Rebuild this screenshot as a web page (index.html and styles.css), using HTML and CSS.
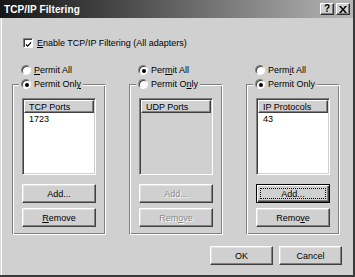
FILE: index.html
```html
<!DOCTYPE html>
<html>
<head>
<meta charset="utf-8">
<link rel="stylesheet" href="styles.css">
</head>
<body>
<div class="window">
  <div class="titlebar">
    <span class="title">TCP/IP Filtering</span>
    <div class="caption-btns">
      <span class="cbtn help">?</span>
      <span class="cbtn close"><svg width="8" height="7" viewBox="0 0 8 7"><path d="M0 0h2l2 2.5L6 0h2L5 3.5 8 7H6L4 4.5 2 7H0l3-3.5z" fill="#000"/></svg></span>
    </div>
  </div>
  <div class="body">
    <div class="check-row">
      <span class="checkbox"><svg width="8" height="8" viewBox="0 0 8 8"><path d="M1 3.5l2 2 4-4.5v2l-4 4.5-2-2z" fill="#000"/></svg></span>
      <span><u>E</u>nable TCP/IP Filtering (All adapters)</span>
    </div>
    <div class="columns">
      <div class="col">
        <div class="radio-row"><span class="radio"></span><span><u>P</u>ermit All</span></div>
        <div class="group">
          <div class="legend"><span class="radio checked"></span><span>Permit Onl<u>y</u></span></div>
          <div class="listbox">
            <div class="lb-header">TCP Ports</div>
            <div class="lb-item">1723</div>
          </div>
          <div class="btn">Add...</div>
          <div class="btn"><u>R</u>emove</div>
        </div>
      </div>
      <div class="col">
        <div class="radio-row"><span class="radio checked"></span><span>Per<u>m</u>it All</span></div>
        <div class="group">
          <div class="legend"><span class="radio"></span><span>Permit O<u>n</u>ly</span></div>
          <div class="listbox disabled">
            <div class="lb-header">UDP Ports</div>
          </div>
          <div class="btn disabled">Add...</div>
          <div class="btn disabled">Rem<u>o</u>ve</div>
        </div>
      </div>
      <div class="col">
        <div class="radio-row"><span class="radio"></span><span>Perm<u>i</u>t All</span></div>
        <div class="group">
          <div class="legend"><span class="radio checked"></span><span>Permit Only</span></div>
          <div class="listbox">
            <div class="lb-header">IP Protocols</div>
            <div class="lb-item">43</div>
          </div>
          <div class="btn default"><span class="focus">Add...</span></div>
          <div class="btn">Remo<u>v</u>e</div>
        </div>
      </div>
    </div>
    <div class="footer">
      <div class="btn ok">OK</div>
      <div class="btn ok">Cancel</div>
    </div>
  </div>
</div>
</body>
</html>
```
FILE: styles.css
```css
html, body {
  margin: 0;
  padding: 0;
  background: #d0d0d0;
}
body {
  font-family: "Liberation Sans", Arial, sans-serif;
  font-size: 9px;
  color: #000;
}
u { text-decoration: underline; text-underline-offset: 1px; }

.window {
  width: 355px;
  height: 277px;
  box-sizing: border-box;
  background: #d0d0d0;
  border-right: 2px solid #3a3a3a;
  border-bottom: 2px solid #3a3a3a;
  display: flex;
  flex-direction: column;
}

.titlebar {
  height: 18px;
  flex: none;
  display: flex;
  align-items: center;
  justify-content: space-between;
  padding: 0 3px 0 4px;
  background: linear-gradient(to right, #161616 0%, #4a4a4a 35%, #b6b6b6 100%);
}
.title {
  color: #fff;
  font-weight: bold;
  font-size: 10px;
  letter-spacing: 0.1px;
}
.caption-btns {
  display: flex;
  gap: 2px;
}
.cbtn {
  width: 14px;
  height: 12px;
  box-sizing: border-box;
  background: #d0d0d0;
  border: 1px solid;
  border-color: #fff #303030 #303030 #fff;
  box-shadow: inset -1px -1px #808080;
  display: flex;
  align-items: center;
  justify-content: center;
  font-weight: bold;
  font-size: 10px;
  line-height: 10px;
}

.body {
  flex: 1;
  border-left: 1px solid #dcdcdc;
  box-shadow: inset 1px 0 #fff;
  padding-top: 20px;
  display: flex;
  flex-direction: column;
}

.check-row {
  display: flex;
  align-items: center;
  gap: 4px;
  padding-left: 22px;
  height: 10px;
  line-height: 10px;
}
.checkbox {
  width: 10px;
  height: 10px;
  box-sizing: border-box;
  background: #fff;
  border: 1px solid;
  border-color: #808080 #fff #fff #808080;
  box-shadow: inset 1px 1px #404040;
  display: flex;
  align-items: center;
  justify-content: center;
}
.checkbox svg { margin: 1px 0 0 1px; }

.columns {
  display: flex;
  gap: 23px;
  padding-left: 11px;
  margin-top: 15px;
}
.col {
  width: 94px;
  display: flex;
  flex-direction: column;
}
.radio-row, .legend {
  display: flex;
  align-items: center;
  gap: 3px;
  height: 14px;
  line-height: 14px;
}
.radio-row {
  padding-left: 9px;
}
.radio {
  width: 10px;
  height: 10px;
  box-sizing: border-box;
  border-radius: 50%;
  background: #fff;
  border: 1px solid;
  border-color: #808080 #fff #fff #808080;
  box-shadow: inset 1px 1px #404040;
  display: flex;
  align-items: center;
  justify-content: center;
}
.radio.checked::after {
  content: "";
  width: 4px;
  height: 4px;
  border-radius: 50%;
  background: #000;
  margin: 1px 0 0 1px;
}

.group {
  margin-top: 7px;
  border: 1px solid;
  border-color: #808080 #fff #fff #808080;
  box-shadow: inset 1px 1px #fff, inset -1px -1px #808080;
  padding: 0 9px 7px 9px;
  display: flex;
  flex-direction: column;
}
.legend {
  margin: -8px 0 0 -3px;
  padding: 0 2px;
  align-self: flex-start;
  background: #d0d0d0;
}

.listbox {
  margin-top: 7px;
  height: 77px;
  box-sizing: border-box;
  background: #fff;
  border: 1px solid;
  border-color: #808080 #fff #fff #808080;
  box-shadow: inset 1px 1px #404040, inset -1px -1px #d0d0d0;
  padding: 1px;
}
.listbox.disabled {
  background: #d0d0d0;
}
.lb-header {
  height: 13px;
  line-height: 12px;
  box-sizing: border-box;
  background: #d0d0d0;
  border: 1px solid;
  border-color: #fff #404040 #404040 #fff;
  box-shadow: inset -1px -1px #808080;
  padding-left: 4px;
}
.lb-item {
  height: 13px;
  line-height: 13px;
  padding-left: 5px;
}

.btn {
  height: 19px;
  box-sizing: border-box;
  margin-top: 9px;
  background: #d0d0d0;
  border: 1px solid;
  border-color: #fff #404040 #404040 #fff;
  box-shadow: inset -1px -1px #808080, inset 1px 1px #e2e2e2;
  display: flex;
  align-items: center;
  justify-content: center;
}
.btn + .btn { margin-top: 5px; }
.btn.disabled {
  color: #8a8a8a;
  text-shadow: 1px 1px #fff;
}
.btn.default {
  border-color: #000;
  box-shadow: inset 1px 1px #fff, inset -1px -1px #404040, inset -2px -2px #808080;
  padding: 3px;
}
.focus {
  flex: 1;
  align-self: stretch;
  border: 1px dotted #000;
  display: flex;
  align-items: center;
  justify-content: center;
}

.footer {
  display: flex;
  justify-content: flex-end;
  gap: 6px;
  padding-right: 11px;
  margin-top: 11px;
}
.btn.ok {
  width: 63px;
  margin-top: 0;
}
```
